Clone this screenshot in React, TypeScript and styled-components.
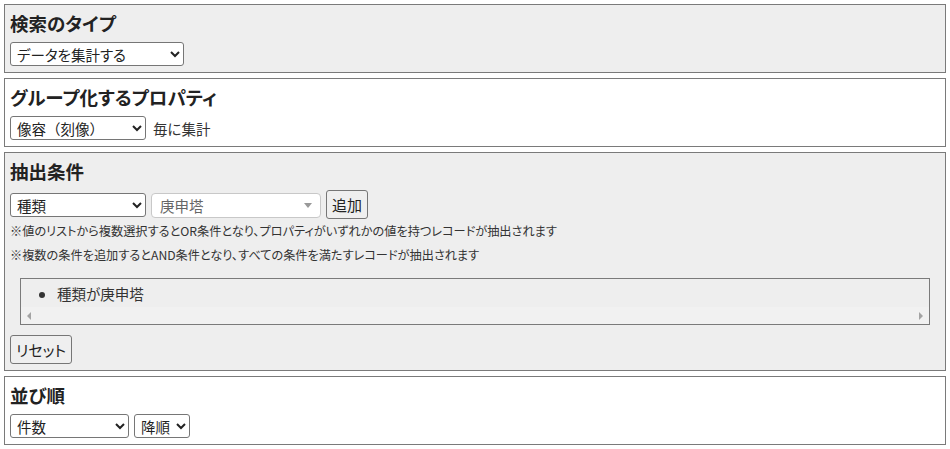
import React from "react";
import styled, { createGlobalStyle } from "styled-components";

const Global = createGlobalStyle`
  html, body { margin: 0; padding: 0; background: #fff; }
  body {
    font-family: "Noto Sans CJK JP", "Noto Sans", sans-serif;
    color: #333;
    font-feature-settings: "palt";
  }
`;

const Page = styled.div`
  display: flex;
  flex-direction: column;
  gap: 5px;
  padding: 4px;
  width: 942px;
`;

const Section = styled.section<{ $shaded?: boolean }>`
  border: 1px solid #7a7a7a;
  background: ${(p) => (p.$shaded ? "#eeeeee" : "#ffffff")};
  padding: 4px 5px 6px 5px;
`;

const Heading = styled.h3`
  margin: 0 0 5px 0;
  font-size: 18.5px;
  line-height: 28px;
  font-weight: 700;
  color: #222;
  font-feature-settings: "palt";
`;

const Row = styled.div`
  display: flex;
  align-items: center;
  gap: 5px;
`;

const Select = styled.select<{ $w: number; $prop?: boolean }>`
  width: ${(p) => p.$w}px;
  height: 24px;
  box-sizing: border-box;
  border: 1px solid #767676;
  border-radius: 3px;
  background: #fff;
  color: #222;
  font-family: "Noto Sans CJK JP", sans-serif;
  font-size: 14.5px;
  font-feature-settings: ${(p) => (p.$prop ? '"palt"' : "normal")};
  padding: 0 2px;
  margin: 0;
`;

const Label = styled.span`
  font-size: 14.5px;
  color: #333;
  margin-left: 2px;
`;

const FakeSelect = styled.div`
  width: 170px;
  height: 25px;
  box-sizing: border-box;
  border: 1px solid #c8c8c8;
  border-radius: 4px;
  background: #fff;
  display: flex;
  align-items: center;
  justify-content: space-between;
  padding: 0 8px;
  font-size: 14.5px;
  color: #666;
  margin-top: 2px;
`;

const Caret = styled.span`
  width: 0;
  height: 0;
  border-left: 4px solid transparent;
  border-right: 4px solid transparent;
  border-top: 5px solid #999;
`;

const Button = styled.button`
  height: 29px;
  box-sizing: border-box;
  border: 1px solid #767676;
  border-radius: 3px;
  background: #efefef;
  color: #222;
  font-family: "Noto Sans CJK JP", sans-serif;
  font-size: 15px;
  padding: 0 5px;
  margin: 0;
  font-feature-settings: "palt";
`;

const Note = styled.p`
  margin: 0;
  font-size: 12.2px;
  line-height: 24px;
  color: #333;
  font-feature-settings: "palt";
  white-space: nowrap;
`;

const ListBox = styled.div`
  margin: 11px 10px 10px 10px;
  border: 1px solid #7a7a7a;
  background: #eeeeee;
`;

const List = styled.ul`
  margin: 0;
  padding: 3px 0 2px 36px;
  list-style: disc;
`;

const Item = styled.li`
  font-size: 14.5px;
  line-height: 23px;
  color: #333;
`;

const ScrollTrack = styled.div`
  height: 17px;
  background: #f1f1f1;
  display: flex;
  align-items: center;
  justify-content: space-between;
  padding: 0 6px;
`;

const Arrow = styled.span<{ $dir: "left" | "right" }>`
  width: 0;
  height: 0;
  border-top: 4px solid transparent;
  border-bottom: 4px solid transparent;
  ${(p) =>
    p.$dir === "left"
      ? "border-right: 4px solid #a3a3a3;"
      : "border-left: 4px solid #a3a3a3;"}
`;

export default function App() {
  return (
    <>
      <Global />
      <Page>
        <Section $shaded>
          <Heading>検索のタイプ</Heading>
          <Row>
            <Select $w={174} $prop defaultValue="agg">
              <option value="agg">データを集計する</option>
            </Select>
          </Row>
        </Section>

        <Section>
          <Heading>グループ化するプロパティ</Heading>
          <Row>
            <Select $w={136} defaultValue="a">
              <option value="a">像容（刻像）</option>
            </Select>
            <Label>毎に集計</Label>
          </Row>
        </Section>

        <Section $shaded>
          <Heading>抽出条件</Heading>
          <Row>
            <Select $w={136} defaultValue="a">
              <option value="a">種類</option>
            </Select>
            <FakeSelect>
              <span>庚申塔</span>
              <Caret />
            </FakeSelect>
            <Button>追加</Button>
          </Row>
          <Note>※値のリストから複数選択するとOR条件となり、プロパティがいずれかの値を持つレコードが抽出されます</Note>
          <Note>※複数の条件を追加するとAND条件となり、すべての条件を満たすレコードが抽出されます</Note>
          <ListBox>
            <List>
              <Item>種類が庚申塔</Item>
            </List>
            <ScrollTrack>
              <Arrow $dir="left" />
              <Arrow $dir="right" />
            </ScrollTrack>
          </ListBox>
          <Button>リセット</Button>
        </Section>

        <Section>
          <Heading>並び順</Heading>
          <Row>
            <Select $w={119} defaultValue="a">
              <option value="a">件数</option>
            </Select>
            <Select $w={56} defaultValue="d">
              <option value="d">降順</option>
            </Select>
          </Row>
        </Section>
      </Page>
    </>
  );
}
